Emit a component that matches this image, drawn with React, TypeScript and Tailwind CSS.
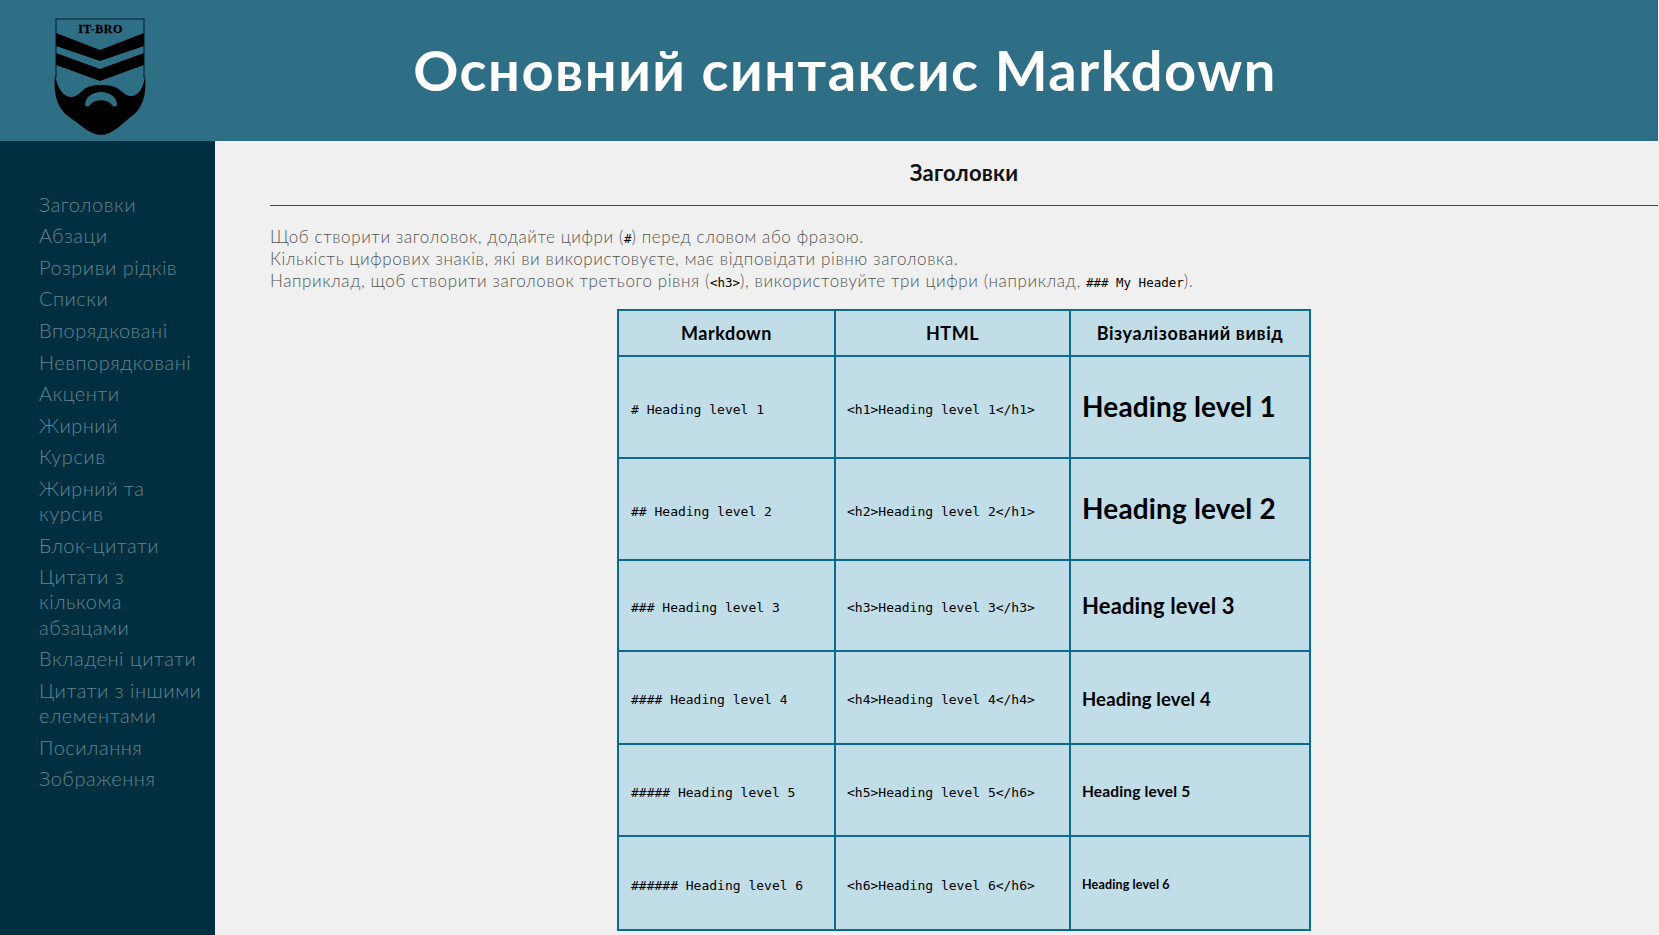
import React from 'react';

const navItems: React.ReactNode[] = [
  'Заголовки',
  'Абзаци',
  'Розриви рідків',
  'Списки',
  'Впорядковані',
  'Невпорядковані',
  'Акценти',
  'Жирний',
  'Курсив',
  <>Жирний та<br />курсив</>,
  'Блок-цитати',
  <>Цитати з<br />кількома<br />абзацами</>,
  'Вкладені цитати',
  <>Цитати з іншими<br />елементами</>,
  'Посилання',
  'Зображення',
];

const rows = [
  { md: '# Heading level 1', html: '<h1>Heading level 1</h1>', text: 'Heading level 1', size: 'text-[28px] pb-[2px]', h: 'h-[102px]' },
  { md: '## Heading level 2', html: '<h2>Heading level 2</h1>', text: 'Heading level 2', size: 'text-[28px] pb-[2px]', h: 'h-[102px]' },
  { md: '### Heading level 3', html: '<h3>Heading level 3</h3>', text: 'Heading level 3', size: 'text-[22px]', h: 'h-[91px]' },
  { md: '#### Heading level 4', html: '<h4>Heading level 4</h4>', text: 'Heading level 4', size: 'text-[18.5px] pt-[4px]', h: 'h-[93px]' },
  { md: '##### Heading level 5', html: '<h5>Heading level 5</h6>', text: 'Heading level 5', size: 'text-[15.5px] pt-[4px]', h: 'h-[92px]' },
  { md: '###### Heading level 6', html: '<h6>Heading level 6</h6>', text: 'Heading level 6', size: 'text-[12.5px] pt-[4px]', h: 'h-[94px]' },
];

const Logo = () => (
  <svg viewBox="0 0 92 118" className="w-[92px] h-[118px]">
    <path d="M2 60V1H90V60" fill="none" stroke="#0f3a4c" strokeWidth="1.5" />
    <path d="M2 15L46 32L90 15V28L46 43L2 28Z" fill="#000" />
    <path d="M2 35L46 51L90 35V47L46 63L2 47Z" fill="#000" />
    <path d="M1 57C3 68 8 78 16 79C24 80 28 71 34 69C40 67 44 67 46.5 67C50 67 54 67 61 69C67 71 71 79 78 78C86 77 90 68 91 57C93 78 88 90 78 98C68 106 58 117 47 117C36 117 26 106 15 99C4 91 -1 78 1 57Z" fill="#000" />
    <path d="M31 87C31 79 39 74 47 74C55 74 63 79 63 87C62 89 59 89 57 86C53 81 41 81 37 86C35 89 32 89 31 87Z" fill="#2f6f85" />
    <text x="46.5" y="15" textAnchor="middle" fontFamily="'Liberation Serif', serif" fontWeight="700" fontSize="12" letterSpacing="0.5" stroke="#000" strokeWidth="0.3">IT-BRO</text>
  </svg>
);

export default function App() {
  return (
    <div className="h-screen overflow-hidden bg-[#f0f0f0] pr-[1px]">
      <div className="h-full flex flex-col font-['Lato',sans-serif]">
        {/* Header */}
        <header className="h-[141px] shrink-0 flex items-center bg-[#2f6f85]">
          <div className="w-[215px] shrink-0 flex justify-center">
            <div className="mr-[15px] mt-[12px]"><Logo /></div>
          </div>
          <h1 className="w-[1260px] text-center text-white text-[56px] font-bold tracking-[1.5px] mt-[-1px]">
            Основний синтаксис Markdown
          </h1>
        </header>

        <div className="flex-1 flex min-h-0">
          {/* Sidebar */}
          <nav className="w-[215px] shrink-0 bg-[#022f40] pl-[39px] pt-[47.5px]">
            {navItems.map((item, i) => (
              <div key={i} className="py-[3.2px] text-[20px] leading-[25.2px] font-light text-[#64838f] tracking-[0.5px]">
                {item}
              </div>
            ))}
          </nav>

          {/* Content */}
          <main className="flex-1 pl-[55px] min-w-0">
            <h2 className="text-center text-[22px] font-bold text-[#111] tracking-[0.2px] pt-[19px] leading-[25px] pb-[20px] border-b border-[#5b2a9d] h-[65px]">
              Заголовки
            </h2>
            <p className="mt-[20px] text-[17px] leading-[22px] font-light text-[#555] tracking-[0.6px]">
              Щоб створити заголовок, додайте цифри (<code className="font-['DejaVu_Sans_Mono',monospace] text-[12.5px] leading-none text-black tracking-normal">#</code>) перед словом або фразою.<br />
              Кількість цифрових знаків, які ви використовуєте, має відповідати рівню заголовка.<br />
              Наприклад, щоб створити заголовок третього рівня (<code className="font-['DejaVu_Sans_Mono',monospace] text-[12.5px] leading-none text-black tracking-normal">&lt;h3&gt;</code>), використовуйте три цифри (наприклад, <code className="font-['DejaVu_Sans_Mono',monospace] text-[12.5px] leading-none text-black tracking-normal">### My Header</code>).
            </p>
            <table className="mt-[17px] mx-auto border-collapse border-2 border-[#0e6a8c] bg-[#c1dde7] text-black">
              <thead>
                <tr className="h-[46px]">
                  <th className="w-[217px] border-2 border-[#0e6a8c] text-[18px] font-bold tracking-[0.5px]">Markdown</th>
                  <th className="w-[235px] border-2 border-[#0e6a8c] text-[18px] font-bold tracking-[0.5px]">HTML</th>
                  <th className="w-[240px] border-2 border-[#0e6a8c] text-[18px] font-bold tracking-[0.6px]">Візуалізований вивід</th>
                </tr>
              </thead>
              <tbody>
                {rows.map((r) => (
                  <tr key={r.md} className={r.h}>
                    <td className="border-2 border-[#0e6a8c] pl-[12px] pr-[11px] pt-[5px] font-['DejaVu_Sans_Mono',monospace] text-[13px]">{r.md}</td>
                    <td className="border-2 border-[#0e6a8c] px-[11px] pt-[5px] font-['DejaVu_Sans_Mono',monospace] text-[13px]">{r.html}</td>
                    <td className={`border-2 border-[#0e6a8c] px-[11px] font-bold tracking-[0.15px] ${r.size}`}>{r.text}</td>
                  </tr>
                ))}
              </tbody>
            </table>
          </main>
        </div>
      </div>
    </div>
  );
}
